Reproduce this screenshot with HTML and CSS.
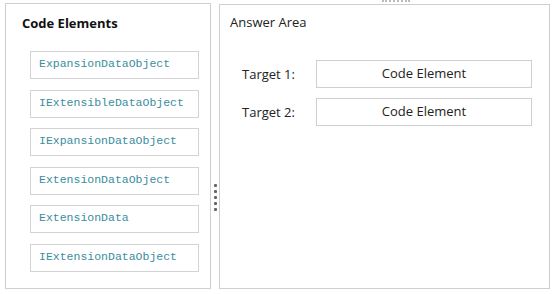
FILE: index.html
```html
<!DOCTYPE html>
<html>
<head>
<meta charset="utf-8">
<link rel="stylesheet" href="styles.css">
</head>
<body>
<div class="topdots"></div>
<div class="layout">
  <div class="panel left">
    <h2 class="title">Code Elements</h2>
    <div class="items">
      <div class="item">ExpansionDataObject</div>
      <div class="item">IExtensibleDataObject</div>
      <div class="item">IExpansionDataObject</div>
      <div class="item">ExtensionDataObject</div>
      <div class="item">ExtensionData</div>
      <div class="item">IExtensionDataObject</div>
    </div>
  </div>
  <div class="handle"><span></span><span></span><span></span><span></span><span></span></div>
  <div class="panel right">
    <div class="atitle">Answer Area</div>
    <div class="targets">
      <div class="row"><span class="label">Target 1:</span><div class="slot">Code Element</div></div>
      <div class="row"><span class="label">Target 2:</span><div class="slot">Code Element</div></div>
    </div>
  </div>
</div>
</body>
</html>
```
FILE: styles.css
```css
html, body { margin: 0; padding: 0; background: #fff; }
body { width: 556px; height: 294px; position: relative; font-family: "Open Sans", "Noto Sans", sans-serif; color: #222; }
.topdots { position: absolute; left: 382px; top: 0; width: 28px; height: 2px; border-top: 2px dotted #bbb; }
.layout { display: flex; padding: 3px 0 0 5px; height: 286px; box-sizing: content-box; }
.panel { border: 1px solid #cfcfcf; box-sizing: border-box; background: #fff; }
.left { width: 206px; height: 286px; }
.title { margin: 0; padding: 10px 0 0 16px; font-size: 13px; font-weight: 700; line-height: 18px; color: #111; }
.items { display: flex; flex-direction: column; gap: 10.5px; padding: 19px 0 0 24px; }
.item { width: 169px; height: 28px; box-sizing: border-box; border: 1px solid #d3d3d3; padding-left: 8px; font-family: "Liberation Mono", "DejaVu Sans Mono", monospace; font-size: 11.5px; line-height: 24px; color: #3a8d9e; }
.handle { width: 8px; display: flex; flex-direction: column; align-items: center; gap: 3px; padding-top: 181px; box-sizing: border-box; }
.handle span { width: 3px; height: 3px; border-radius: 1px; background: #666; }
.right { width: 331px; margin-top: 1px; height: 285px; }
.atitle { padding: 8px 0 0 10px; font-size: 13px; line-height: 18px; color: #222; }
.targets { display: flex; flex-direction: column; gap: 10px; padding-top: 29px; }
.row { display: flex; align-items: center; }
.label { width: 74px; padding-left: 22px; font-size: 13px; color: #222; }
.slot { width: 216px; height: 28px; box-sizing: border-box; border: 1px solid #cfcfcf; text-align: center; font-size: 13px; line-height: 24px; color: #222; }
```
